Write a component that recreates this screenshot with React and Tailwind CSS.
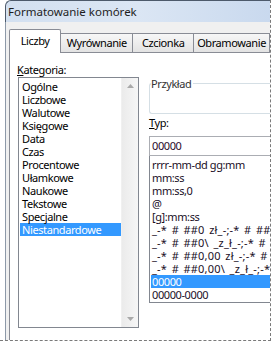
import React from "react";

const categories = [
  "Ogólne", "Liczbowe", "Walutowe", "Księgowe", "Data", "Czas",
  "Procentowe", "Ułamkowe", "Naukowe", "Tekstowe", "Specjalne", "Niestandardowe",
];

const formats = [
  "rrrr-mm-dd gg:mm",
  "mm:ss",
  "mm:ss,0",
  "@",
  "[g]:mm:ss",
  "_-* # ##0 zł_-;-* # ##0 zł_-;_-* \"-\" zł_-;_-@_-",
  "_-* # ##0\\ _z_ł_-;-* # ##0\\ _z_ł_-",
  "_-* # ##0,00 zł_-;-* # ##0,00 zł_-",
  "_-* # ##0,00\\ _z_ł_-;-* # ##0,00\\ _z_ł_-",
  "00000",
  "00000-0000",
];

function Tab({ label, active, w }) {
  if (active) {
    return (
      <div className={`${w} h-[24px] bg-white border border-b-0 border-[#898c95] rounded-t-[2px] flex items-center justify-center -mb-px relative z-10`}>
        <span className="pb-[1px]">{label}</span>
      </div>
    );
  }
  return (
    <div className={`${w} h-[19px] bg-gradient-to-b from-[#f7f7f7] to-[#e3e3e3] border border-b-0 border-l-0 border-[#898c95] flex items-center justify-center`}>
      <span>{label}</span>
    </div>
  );
}

export default function App() {
  return (
    <div className="w-[275px] h-[343px] bg-white overflow-hidden text-[11px] tracking-[-0.4px] text-black" style={{ fontFamily: '"Noto Sans", "Open Sans", sans-serif' }}>
      <div className="w-[271px] h-[341px] border-r border-b border-dashed border-[#7a7a7a] overflow-hidden flex flex-col">
        {/* title bar */}
        <div className="h-[22px] ml-[5px] shrink-0 border-t border-l border-[#4d5a6b] rounded-tl-[6px] bg-gradient-to-r from-[#d3e0f0] via-[#dbe6f4] to-[#c9d9ee] flex items-center pl-[2px]">
          <span className="text-[11.5px] tracking-normal leading-none text-[#1e1e1e]">Formatowanie komórek</span>
        </div>

        {/* body */}
        <div className="flex-1 ml-[5px] border-l border-[#8d99a8] bg-[#f0f0f0] pl-[3px] pt-[7px] flex flex-col">
          {/* tabs */}
          <div className="flex items-end h-[23px] shrink-0">
            <Tab label="Liczby" active w="w-[55px]" />
            <Tab label="Wyrównanie" w="w-[76px]" />
            <Tab label="Czcionka" w="w-[64px]" />
            <Tab label="Obramowanie" w="w-[80px]" />
          </div>

          {/* tab page */}
          <div className="flex-1 bg-white border-l border-t border-[#898c95] flex pl-[8px] pt-[10px] gap-[10px]">
            {/* left column */}
            <div className="w-[121px] flex flex-col">
              <div className="h-[13px] leading-[13px] -ml-[1px]">
                <span className="underline underline-offset-1">K</span>ategoria:
              </div>
              <div className="mt-[1px] h-[251px] border border-[#828790] flex">
                <div className="flex-1 pt-[2px] pl-[1px]">
                  {categories.map((c) => (
                    <div
                      key={c}
                      className={`h-[13px] leading-[13px] pl-[2px] ${c === "Niestandardowe" ? "bg-[#3399ff] text-white" : ""}`}
                    >
                      {c}
                    </div>
                  ))}
                </div>
                <div className="w-[17px] bg-gradient-to-r from-[#ebebeb] to-[#f6f6f6] border-l border-[#f0f0f0] flex flex-col items-center justify-between py-[6px]">
                  <svg width="7" height="4" viewBox="0 0 7 4"><path d="M0 4 L3.5 0 L7 4 Z" fill="#a9a9a9" /></svg>
                  <svg width="7" height="4" viewBox="0 0 7 4"><path d="M0 0 L3.5 4 L7 0 Z" fill="#a9a9a9" /></svg>
                </div>
              </div>
            </div>

            {/* right column */}
            <div className="flex-1 flex flex-col min-w-0">
              {/* Przykład group */}
              <div className="relative mt-[20px] h-[31px] border border-r-0 border-[#d5dfe5] rounded-l-[3px]">
                <span className="absolute -top-[7px] left-[1px] bg-white pr-[2px] leading-[13px] text-[#333]">Przykład</span>
              </div>
              <div className="mt-[2px] h-[13px] leading-[13px]">
                <span className="underline underline-offset-1">T</span>yp:
              </div>
              <div className="mt-[7px] h-[20px] border border-r-0 border-[#abadb3] flex items-center pl-[2px] text-[#2b0a2b]">
                00000
              </div>
              <div className="h-[147px] border border-t-0 border-r-0 border-[#828790] pt-[2px] pl-[1px] overflow-hidden text-[#1a0f1f]">
                {formats.map((f, i) => (
                  <div
                    key={i}
                    className={`h-[13px] leading-[13px] pl-[1px] whitespace-nowrap ${f.includes("#") ? "tracking-[0.2px] [word-spacing:1.5px]" : ""} ${f === "00000" ? "bg-[#3399ff] text-white" : ""}`}
                  >
                    {f}
                  </div>
                ))}
              </div>
            </div>
          </div>
        </div>
      </div>
    </div>
  );
}
